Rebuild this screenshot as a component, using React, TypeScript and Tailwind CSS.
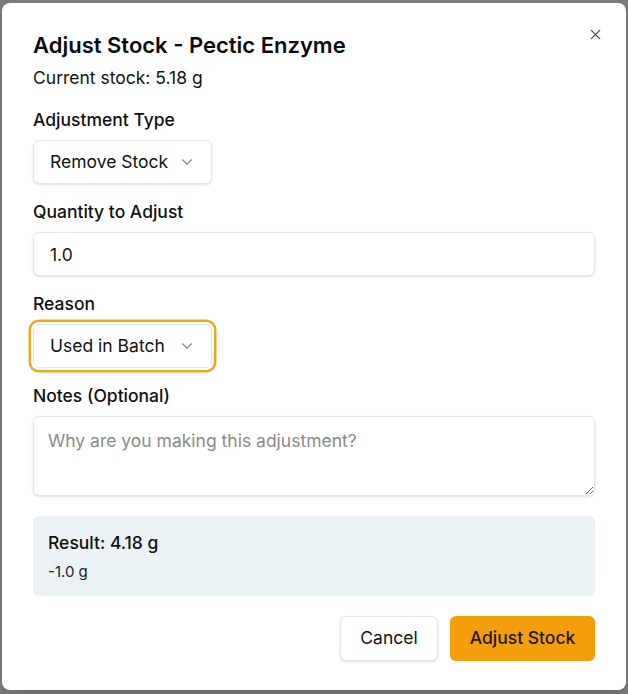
import { ChevronDown, X } from "lucide-react";

function SelectBox({ value, focused }: { value: string; focused?: boolean }) {
  return (
    <button
      type="button"
      className={`flex h-11 w-[179px] items-center justify-between rounded-md border border-[#e4e6ea] bg-white pl-4 pr-[15px] text-[17.5px] text-[#111] shadow-sm ${
        focused ? "ring-[2.5px] ring-[#f1a322] ring-offset-2" : ""
      }`}
    >
      <span>{value}</span>
      <ChevronDown size={18} strokeWidth={1.5} className="text-[#888]" />
    </button>
  );
}

function Field({ label, children }: { label: string; children: React.ReactNode }) {
  return (
    <div className="flex flex-col gap-2">
      <label className="text-[17.5px] font-medium leading-6 text-[#111]">{label}</label>
      {children}
    </div>
  );
}

export default function App() {
  return (
    <div className="min-h-screen bg-[#7b7b7b] pl-[2px] pr-[2px] pt-[3px]" style={{ fontFamily: "Inter, 'Noto Sans', sans-serif" }}>
      <div className="relative flex h-[687px] flex-col rounded-lg bg-white px-[31px] pt-[28px] shadow-lg">
        <button type="button" className="absolute right-[22px] top-[23px] text-[#555]" aria-label="Close">
          <X size={17} strokeWidth={1.6} />
        </button>

        <h2 className="text-[22px] font-semibold leading-7 text-[#0b0b0f]">Adjust Stock - Pectic Enzyme</h2>
        <p className="mt-[7px] text-[17.5px] leading-6 text-[#111]">Current stock: 5.18 g</p>

        <div className="mt-[18px] flex flex-col gap-4">
          <Field label="Adjustment Type">
            <SelectBox value="Remove Stock" />
          </Field>

          <Field label="Quantity to Adjust">
            <input
              defaultValue="1.0"
              className="h-11 w-full rounded-md border border-[#e4e6ea] bg-white px-4 text-[17.5px] text-[#111] shadow-sm outline-none"
            />
          </Field>

          <Field label="Reason">
            <SelectBox value="Used in Batch" focused />
          </Field>

          <Field label="Notes (Optional)">
            <textarea
              placeholder="Why are you making this adjustment?"
              className="h-20 w-full rounded-md border border-[#e4e6ea] bg-white px-[14px] py-3 text-[17.5px] leading-6 text-[#111] shadow-sm outline-none placeholder:text-[#8a8a8a]"
            />
          </Field>
        </div>

        <div className="mt-5 flex h-20 flex-col justify-center gap-[7px] rounded-md bg-[#eaf2f5] px-[15px]">
          <p className="text-[17.5px] font-medium leading-6 text-[#111]">Result: 4.18 g</p>
          <p className="text-[15px] leading-5 text-[#222]">-1.0 g</p>
        </div>

        <div className="mt-5 flex justify-end gap-3">
          <button
            type="button"
            className="h-[45px] w-[98px] rounded-md border border-[#e4e6ea] bg-white text-[17.5px] text-[#111] shadow-sm"
          >
            Cancel
          </button>
          <button
            type="button"
            className="h-[45px] w-[145px] rounded-md bg-[#f59e0b] text-[17.5px] font-medium text-[#1a1a1a]"
          >
            Adjust Stock
          </button>
        </div>
      </div>
    </div>
  );
}
